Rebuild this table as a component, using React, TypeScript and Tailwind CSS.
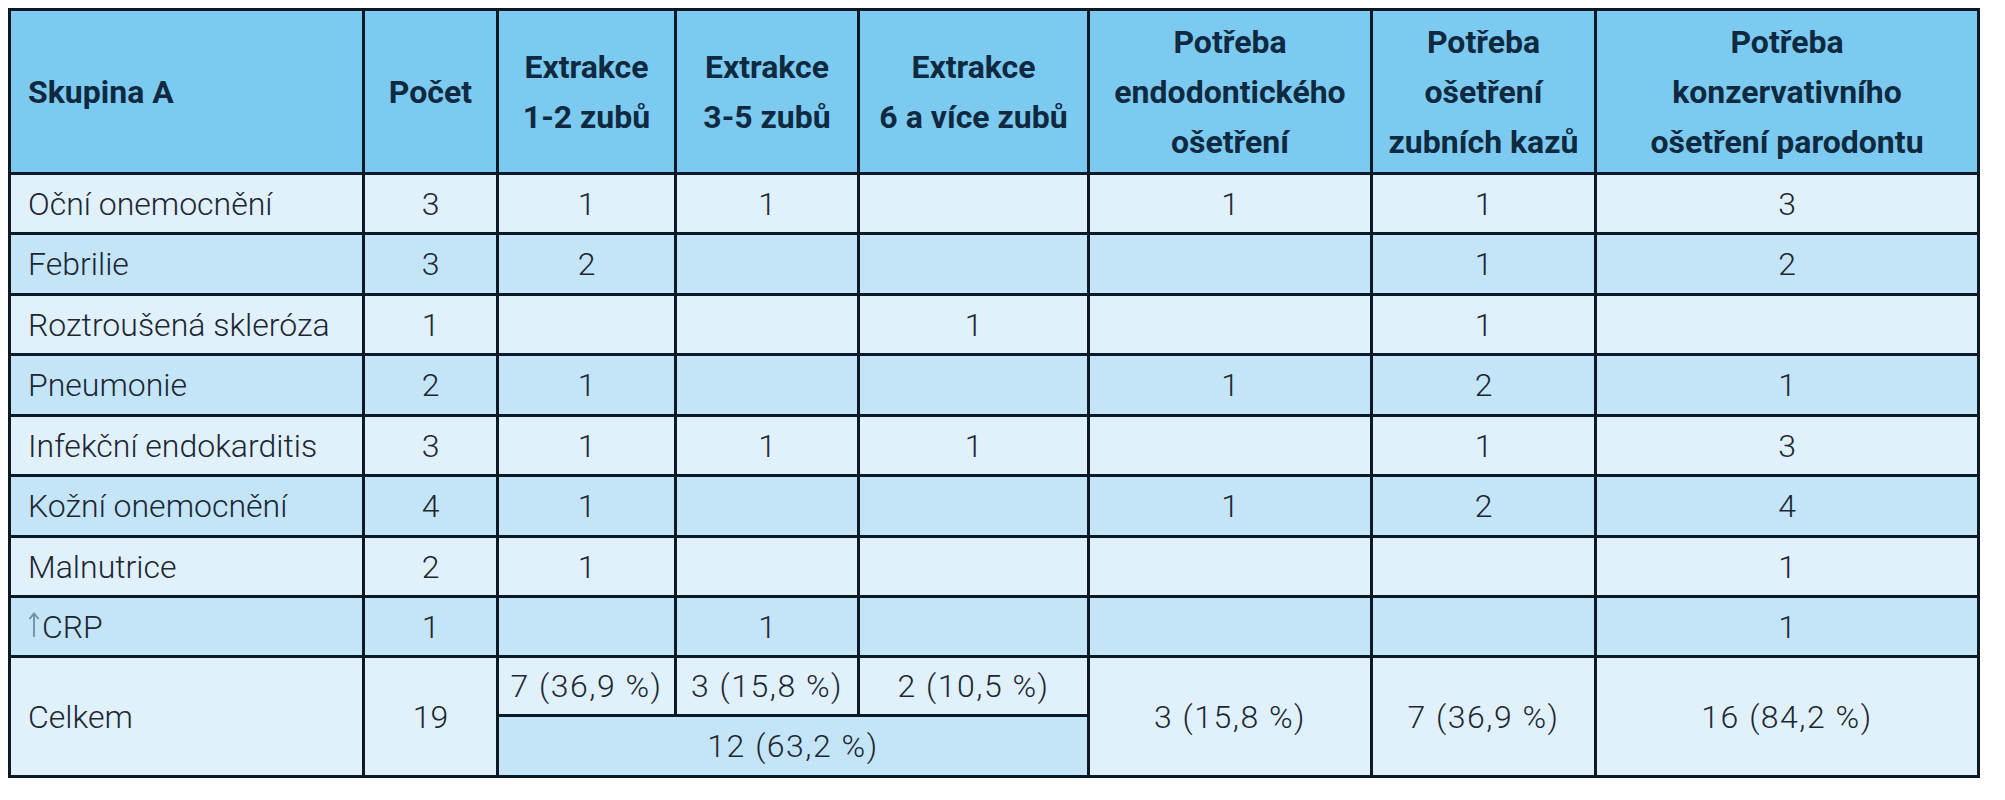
const rows: { label: string; cells: string[]; dark: boolean }[] = [
  { label: 'Oční onemocnění', cells: ['3', '1', '1', '', '1', '1', '3'], dark: false },
  { label: 'Febrilie', cells: ['3', '2', '', '', '', '1', '2'], dark: true },
  { label: 'Roztroušená skleróza', cells: ['1', '', '', '1', '', '1', ''], dark: false },
  { label: 'Pneumonie', cells: ['2', '1', '', '', '1', '2', '1'], dark: true },
  { label: 'Infekční endokarditis', cells: ['3', '1', '1', '1', '', '1', '3'], dark: false },
  { label: 'Kožní onemocnění', cells: ['4', '1', '', '', '1', '2', '4'], dark: true },
  { label: 'Malnutrice', cells: ['2', '1', '', '', '', '', '1'], dark: false },
  { label: 'CRP', cells: ['1', '', '1', '', '', '', '1'], dark: true },
];

const heights = ['h-[60px]', 'h-[61px]', 'h-[60px]', 'h-[61px]', 'h-[60px]', 'h-[61px]', 'h-[60px]', 'h-[60px]'];

const th = 'border-[3px] border-[#0c1a28] font-bold text-[#0f2a40] text-[32px] leading-[50px] text-center align-middle';
const td = 'border-[3px] border-[#0c1a28] text-center align-middle';
const pct = `${td} tracking-[1.5px]`;

export default function App() {
  return (
    <div className="min-h-[800px] bg-white pl-[8px] pt-[8px]">
      <table
        className="table-fixed border-collapse text-[#1c2733] font-light text-[32px]"
        style={{ fontFamily: 'Roboto, "Liberation Sans", sans-serif' }}
      >
        <colgroup>
          <col className="w-[354px]" />
          <col className="w-[134px]" />
          <col className="w-[178px]" />
          <col className="w-[183px]" />
          <col className="w-[230px]" />
          <col className="w-[283px]" />
          <col className="w-[224px]" />
          <col className="w-[383px]" />
        </colgroup>
        <thead>
          <tr className="h-[164px] bg-[#7dcaf0]">
            <th className={`${th} text-left pl-[17px]`}>Skupina A</th>
            <th className={th}>Počet</th>
            <th className={th}>Extrakce<br />1-2 zubů</th>
            <th className={th}>Extrakce<br />3-5 zubů</th>
            <th className={th}>Extrakce<br />6 a více zubů</th>
            <th className={th}>Potřeba<br />endodontického<br />ošetření</th>
            <th className={th}>Potřeba<br />ošetření<br />zubních kazů</th>
            <th className={th}>Potřeba<br />konzervativního<br />ošetření parodontu</th>
          </tr>
        </thead>
        <tbody>
          {rows.map((r, i) => (
            <tr key={r.label} className={`${heights[i]} ${r.dark ? 'bg-[#c4e5f8]' : 'bg-[#e0f1fc]'}`}>
              <td className={`${td} text-left pl-[17px]`}>
                {r.label === 'CRP' ? (
                  <span className="inline-flex items-center">
                    <svg width="12" height="26" viewBox="0 0 12 26" className="mr-[2px] -mt-[4px]">
                      <path d="M6 25V2M1.5 7L6 1.5L10.5 7" fill="none" stroke="#6d8fa3" strokeWidth="1.8" />
                    </svg>
                    CRP
                  </span>
                ) : (
                  r.label
                )}
              </td>
              {r.cells.map((c, j) => (
                <td key={j} className={td}>{c}</td>
              ))}
            </tr>
          ))}
          <tr className="h-[59px] bg-[#e0f1fc]">
            <td rowSpan={2} className={`${td} text-left pl-[17px]`}>Celkem</td>
            <td rowSpan={2} className={td}>19</td>
            <td className={pct}>7 (36,9 %)</td>
            <td className={pct}>3 (15,8 %)</td>
            <td className={pct}>2 (10,5 %)</td>
            <td rowSpan={2} className={pct}>3 (15,8 %)</td>
            <td rowSpan={2} className={pct}>7 (36,9 %)</td>
            <td rowSpan={2} className={pct}>16 (84,2 %)</td>
          </tr>
          <tr className="h-[61px]">
            <td colSpan={3} className={`${pct} bg-[#c4e5f8]`}>12 (63,2 %)</td>
          </tr>
        </tbody>
      </table>
    </div>
  );
}
